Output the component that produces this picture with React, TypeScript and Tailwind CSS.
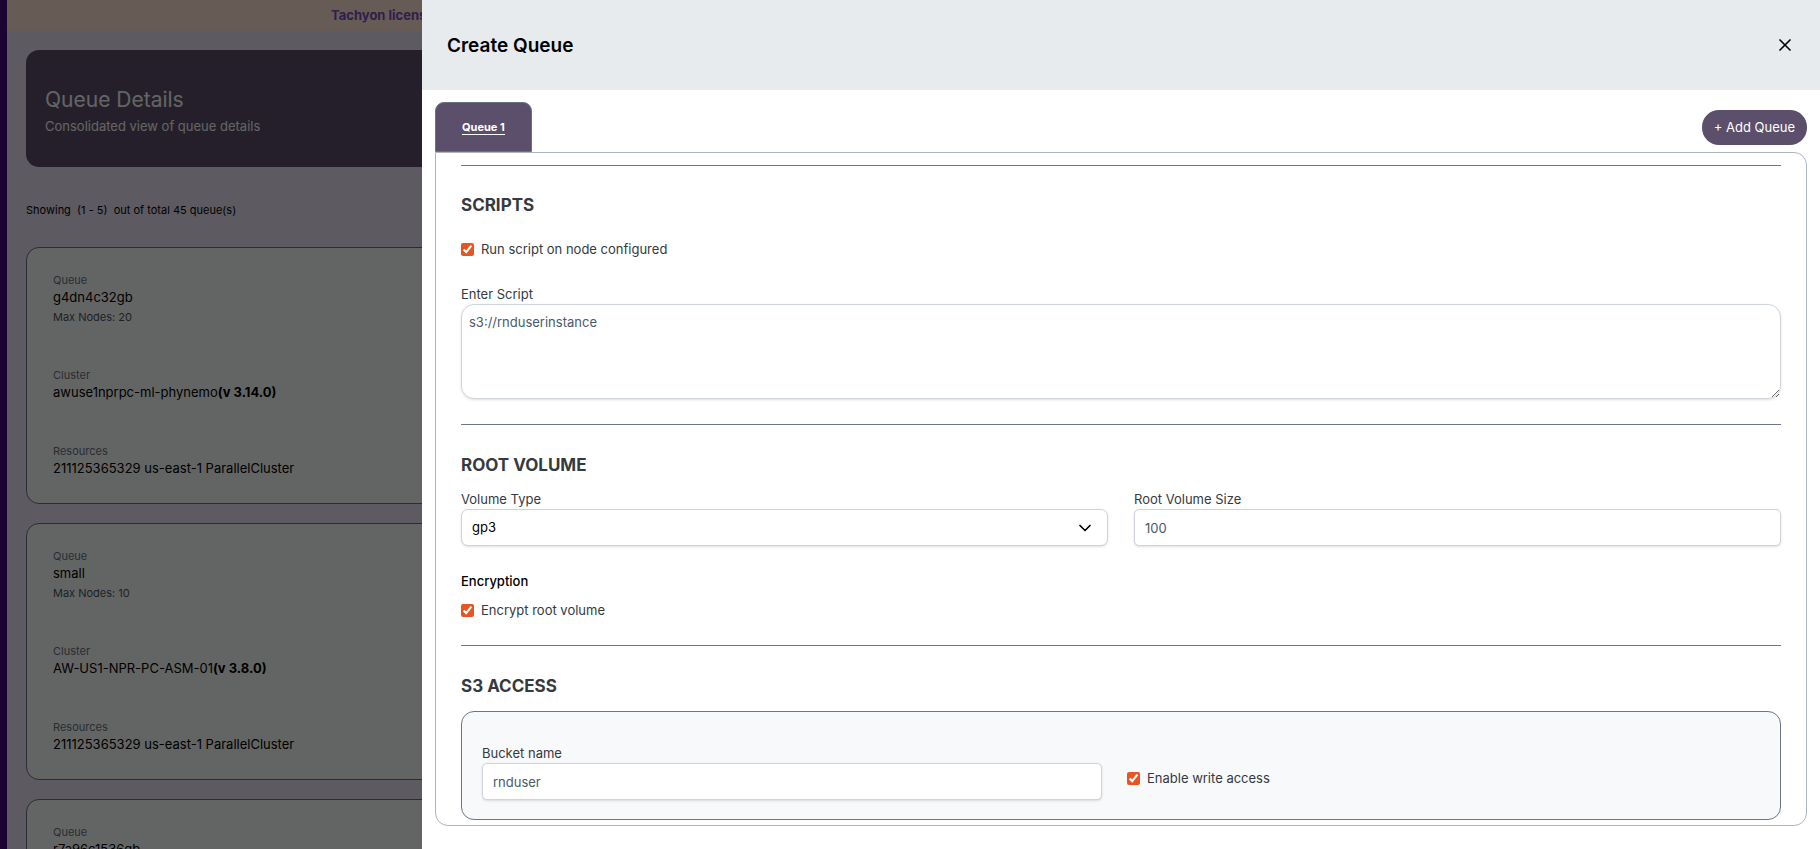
import type { ReactNode } from "react";
import { ChevronDown, X } from "lucide-react";

type Queue = {
  name: string;
  maxNodes: number;
  cluster: string;
  version: string;
  resources: string;
};

const queues: Queue[] = [
  {
    name: "g4dn4c32gb",
    maxNodes: 20,
    cluster: "awuse1nprpc-ml-phynemo",
    version: "3.14.0",
    resources: "211125365329 us-east-1 ParallelCluster",
  },
  {
    name: "small",
    maxNodes: 10,
    cluster: "AW-US1-NPR-PC-ASM-01",
    version: "3.8.0",
    resources: "211125365329 us-east-1 ParallelCluster",
  },
  {
    name: "r7a96c1536gb",
    maxNodes: 10,
    cluster: "AW-US1-NPR-PC-ASM-01",
    version: "3.8.0",
    resources: "211125365329 us-east-1 ParallelCluster",
  },
];

const fieldClass =
  "h-[37px] w-full rounded-[5px] border border-[#ced4da] bg-white px-[10px] text-[13px] text-[#495a6b] shadow-sm outline-none";

const Detail = ({ label, children }: { label: string; children: ReactNode }) => (
  <div className="min-h-9">
    <p className="text-[11px] leading-[18px] text-[#6b7280]">{label}</p>
    {children}
  </div>
);

const QueueCard = ({ queue }: { queue: Queue }) => (
  <article className="flex flex-col gap-10 rounded-[13px] border border-[#6b7280] bg-[#f8fcf9] px-[26px] pt-[23px] pb-[25px] text-[13px] leading-4">
    <Detail label="Queue">
      <p>{queue.name}</p>
      <p className="mt-[3px] text-[11px] leading-[18px] text-[#4b5563]">Max Nodes: {queue.maxNodes}</p>
    </Detail>
    <Detail label="Cluster">
      <p>
        {queue.cluster}
        <b>(v {queue.version})</b>
      </p>
    </Detail>
    <Detail label="Resources">
      <p>{queue.resources}</p>
    </Detail>
  </article>
);

const QueuesPage = () => (
  <div className="flex h-screen overflow-hidden bg-[#e8e4f2]">
    <div className="w-[7px] shrink-0 bg-[#460a7d]" />
    <div className="min-w-0 flex-1">
      <div className="h-[31px] bg-[#ffe6d5] pl-[324px] text-[13px] leading-[31px] font-bold whitespace-nowrap text-[#7c4dbe]">
        Tachyon license
      </div>
      <main className="px-[19px] pt-[19px]">
        <header className="h-[117px] rounded-[13px] bg-[#5c4f6c] px-[19px] pt-[33px] text-[#f8fcf9]">
          <h1 className="text-[21px] leading-[34px] font-normal">Queue Details</h1>
          <p className="text-[13px] leading-[18px]">Consolidated view of queue details</p>
        </header>
        <p className="mt-[34px] text-[11px] leading-[18px] whitespace-pre">
          {"Showing  (1 - 5)  out of total 45 queue(s)"}
        </p>
        <div className="mt-7 flex flex-col gap-[19px]">
          {queues.map((queue) => (
            <QueueCard key={queue.name} queue={queue} />
          ))}
        </div>
      </main>
    </div>
  </div>
);

const SectionTitle = ({ children }: { children: ReactNode }) => (
  <h3 className="text-[17px] leading-6 font-bold text-[#343a40]">{children}</h3>
);

const Field = ({ id, label, children }: { id: string; label: string; children: ReactNode }) => (
  <div>
    <label htmlFor={id} className="block text-[13px] leading-5 text-[#343a40]">
      {label}
    </label>
    {children}
  </div>
);

const Check = ({ label }: { label: string }) => (
  <label className="flex items-center gap-[7px] text-[13px] leading-5 text-[#343a40]">
    <input type="checkbox" defaultChecked className="size-[13px] accent-[#e95420]" />
    {label}
  </label>
);

const CreateQueueDrawer = () => (
  <aside
    role="dialog"
    aria-label="Create Queue"
    className="fixed inset-y-0 right-0 left-[422px] flex flex-col bg-white"
  >
    <header className="flex h-[90px] shrink-0 items-center justify-between bg-[#e7ebee] px-[25px]">
      <h2 className="pt-0.5 text-[19px] leading-6 font-semibold">Create Queue</h2>
      <button type="button" aria-label="Close">
        <X size={20} strokeWidth={2} />
      </button>
    </header>
    <div className="flex min-h-0 flex-1 flex-col px-[13px] pt-3 pb-[23px]">
      <div className="flex items-center justify-between">
        <button
          type="button"
          className="h-[50px] rounded-t-[9px] border border-[#667380] bg-[#5c4f6c] px-[26px] text-[11px] font-bold text-white"
        >
          <span className="border-b border-white">Queue 1</span>
        </button>
        <button
          type="button"
          className="h-[35px] rounded-[17px] bg-[#5c4f6c] px-3 pt-px text-[13px] text-white"
        >
          + Add Queue
        </button>
      </div>
      <form className="min-h-0 flex-1 overflow-hidden rounded-[13px] rounded-tl-none border border-[#adb5bd] px-[25px] pt-3">
        <section className="border-t border-[#6b7785] pt-[27px] pb-[25px]">
          <SectionTitle>SCRIPTS</SectionTitle>
          <div className="mt-[22px] mb-[25px]">
            <Check label="Run script on node configured" />
          </div>
          <Field id="script" label="Enter Script">
            <textarea
              id="script"
              defaultValue="s3://rnduserinstance"
              className="block h-[95px] w-full resize rounded-[13px] border border-[#ced4da] px-[7px] py-[7px] text-[13px] leading-5 text-[#495a6b] shadow-sm outline-none"
            />
          </Field>
        </section>
        <section className="border-t border-[#6b7785] pt-7 pb-[25px]">
          <SectionTitle>ROOT VOLUME</SectionTitle>
          <div className="mt-3 grid grid-cols-2 gap-[26px]">
            <Field id="volume-type" label="Volume Type">
              <div className="relative">
                <select
                  id="volume-type"
                  className="h-[37px] w-full appearance-none rounded-[7px] border border-[#ced4da] bg-white px-[10px] text-[13px] text-black shadow-sm outline-none"
                >
                  <option>gp3</option>
                </select>
                <ChevronDown
                  size={20}
                  className="pointer-events-none absolute top-1/2 right-[13px] -translate-y-1/2"
                />
              </div>
            </Field>
            <Field id="volume-size" label="Root Volume Size">
              <input id="volume-size" type="text" defaultValue="100" className={fieldClass} />
            </Field>
          </div>
          <p className="mt-[25px] mb-[9px] text-[13px] leading-5 font-medium">Encryption</p>
          <Check label="Encrypt root volume" />
        </section>
        <section className="border-t border-[#6b7785] pt-7">
          <SectionTitle>S3 ACCESS</SectionTitle>
          <div className="mt-[13px] grid grid-cols-2 gap-[25px] rounded-[13px] border border-[#6b7785] bg-[#f8f9fb] pt-[31px] pr-[33px] pb-[19px] pl-5">
            <Field id="bucket" label="Bucket name">
              <input id="bucket" type="text" defaultValue="rnduser" className={fieldClass} />
            </Field>
            <div className="pt-[25px]">
              <Check label="Enable write access" />
            </div>
          </div>
        </section>
      </form>
    </div>
  </aside>
);

export default function App() {
  return (
    <div className="font-[Inter,sans-serif] text-black">
      <QueuesPage />
      <div className="fixed inset-0 bg-black/60" />
      <CreateQueueDrawer />
    </div>
  );
}
